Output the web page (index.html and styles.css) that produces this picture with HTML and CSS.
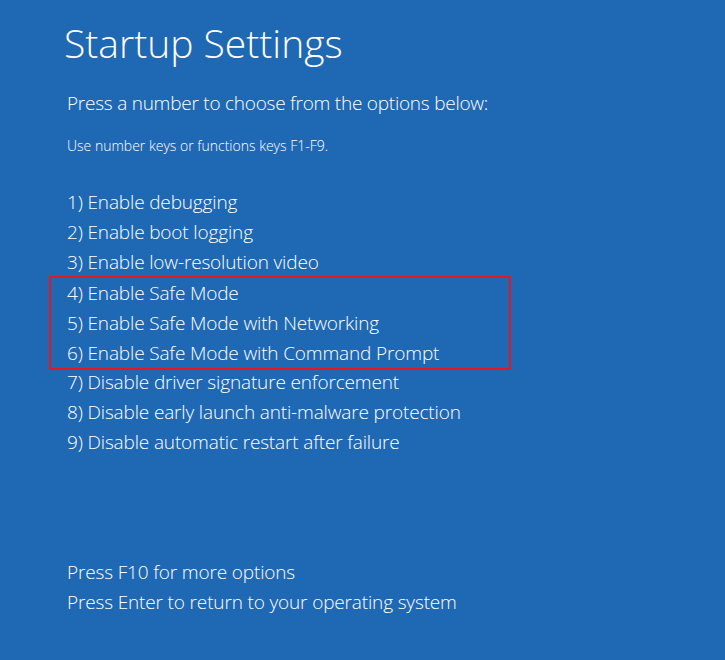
FILE: index.html
```html
<!DOCTYPE html>
<html lang="en">
<head>
<meta charset="utf-8">
<title>Startup Settings</title>
<link rel="stylesheet" href="styles.css">
</head>
<body>
<main class="screen">
  <h1 class="title">Startup Settings</h1>
  <p class="lead">Press a number to choose from the options below:</p>
  <p class="hint">Use number keys or functions keys F1-F9.</p>
  <div class="options">
    <div class="option">1) Enable debugging</div>
    <div class="option">2) Enable boot logging</div>
    <div class="option">3) Enable low-resolution video</div>
    <div class="highlight">
      <div class="option">4) Enable Safe Mode</div>
      <div class="option">5) Enable Safe Mode with Networking</div>
      <div class="option">6) Enable Safe Mode with Command Prompt</div>
    </div>
    <div class="option">7) Disable driver signature enforcement</div>
    <div class="option">8) Disable early launch anti-malware protection</div>
    <div class="option">9) Disable automatic restart after failure</div>
  </div>
  <div class="footer">
    <div class="option">Press F10 for more options</div>
    <div class="option">Press Enter to return to your operating system</div>
  </div>
</main>
</body>
</html>
```
FILE: styles.css
```css
html, body {
  margin: 0;
  padding: 0;
  height: 100%;
}
body {
  background: #1f68b4;
  color: #ffffff;
  font-family: "Open Sans", "Noto Sans", sans-serif;
  overflow: hidden;
}
.screen {
  padding: 21px 0 0 67px;
  box-sizing: border-box;
  height: 660px;
}
.title {
  margin: 0 0 0 -3px;
  font-size: 39px;
  line-height: 44px;
  font-weight: 300;
}
.lead {
  margin: 24px 0 0 0;
  font-size: 19px;
  line-height: 28px;
  font-weight: 350;
  letter-spacing: -0.24px;
}
.hint {
  margin: 19px 0 0 0;
  font-size: 14px;
  line-height: 20px;
  font-weight: 350;
  letter-spacing: 0;
}
.options {
  margin-top: 31px;
  display: flex;
  flex-direction: column;
}
.option {
  font-size: 19px;
  line-height: 30px;
  font-weight: 350;
  letter-spacing: -0.15px;
}
.highlight {
  margin: -1px 0 -3px -18px;
  width: 462px;
  box-sizing: border-box;
  border: 2px solid #e8161f;
  padding-left: 16px;
}
.footer {
  margin-top: 100px;
  display: flex;
  flex-direction: column;
}
```
